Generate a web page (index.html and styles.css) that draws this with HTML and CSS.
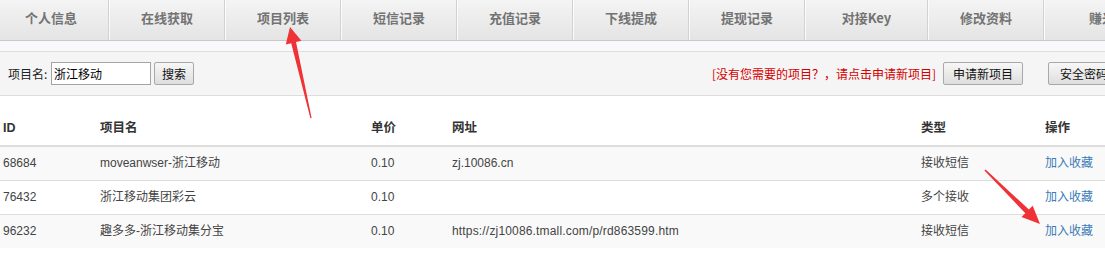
FILE: index.html
```html
<!DOCTYPE html>
<html lang="zh-CN">
<head>
<meta charset="utf-8">
<title>项目列表</title>
<link rel="stylesheet" href="styles.css">
</head>
<body>
<div class="page">
  <nav class="tabs">
    <a class="tab">个人信息</a>
    <a class="tab">在线获取</a>
    <a class="tab">项目列表</a>
    <a class="tab">短信记录</a>
    <a class="tab">充值记录</a>
    <a class="tab">下线提成</a>
    <a class="tab">提现记录</a>
    <a class="tab tab-wide">对接Key</a>
    <a class="tab">修改资料</a>
    <a class="tab">赚米</a>
  </nav>
  <div class="band"></div>
  <div class="searchbar">
    <label class="search-label">项目名:</label>
    <input class="search-input" type="text" value="浙江移动">
    <button class="btn btn-search">搜索</button>
    <div class="search-right">
      <span class="notice">[没有您需要的项目？，请点击申请新项目]</span>
      <button class="btn btn-apply">申请新项目</button>
      <button class="btn btn-safe">安全密码</button>
    </div>
  </div>
  <table class="list">
    <colgroup>
      <col class="c-id"><col class="c-name"><col class="c-price"><col class="c-url"><col class="c-type"><col class="c-op">
    </colgroup>
    <thead>
      <tr><th>ID</th><th>项目名</th><th>单价</th><th>网址</th><th>类型</th><th>操作</th></tr>
    </thead>
    <tbody>
      <tr class="odd"><td>68684</td><td>moveanwser-浙江移动</td><td>0.10</td><td>zj.10086.cn</td><td>接收短信</td><td><a class="link">加入收藏</a></td></tr>
      <tr><td>76432</td><td>浙江移动集团彩云</td><td>0.10</td><td></td><td>多个接收</td><td><a class="link">加入收藏</a></td></tr>
      <tr class="odd"><td>96232</td><td>趣多多-浙江移动集分宝</td><td>0.10</td><td class="url">https://zj10086.tmall.com/p/rd863599.htm</td><td>接收短信</td><td><a class="link">加入收藏</a></td></tr>
    </tbody>
  </table>
  <svg class="arrows" width="1105" height="263" viewBox="0 0 1105 263">
    <polygon fill="#ee3236" points="311.6,118 296,42 301.4,40.8 290,27 285.8,44.4 291.2,43.2 310.4,118.2"/>
    <polygon fill="#ee3236" points="984.4,170.6 1025.3,213.2 1021.5,217.1 1040,224 1032.7,205.7 1028.9,209.6 985.6,169.4"/>
  </svg>
</div>
</body>
</html>
```
FILE: styles.css
```css
html, body {
  margin: 0;
  padding: 0;
  background: #ffffff;
}
body {
  font-family: "Liberation Sans", Arial, "Noto Sans CJK SC", sans-serif;
  font-size: 12px;
  color: #333333;
  overflow: hidden;
  width: 1105px;
  height: 263px;
}
.page {
  position: relative;
  width: 1105px;
  height: 263px;
  overflow: hidden;
}
.tabs {
  display: flex;
  height: 40px;
  margin-left: -7px;
  width: 1200px;
  background: linear-gradient(#f4f4f4, #e4e4e4);
  border-bottom: 1px solid #c9c9c9;
}
.tab {
  flex: 0 0 auto;
  width: 114px;
  box-sizing: content-box;
  border-left: 1px solid #fbfbfb;
  border-right: 1px solid #d2d2d2;
  line-height: 36px;
  text-align: center;
  font-family: "Noto Sans CJK SC", sans-serif;
  font-weight: bold;
  font-size: 13px;
  color: #737373;
}
.tab-wide {
  width: 121px;
}
.band {
  height: 10px;
  background: #f9f9fc;
  border-bottom: 1px solid #dedede;
}
.searchbar {
  display: flex;
  align-items: center;
  height: 44px;
  width: 1130px;
  box-sizing: border-box;
  padding: 0 10px 0 8px;
  background: #f5f5f5;
  border-bottom: 1px solid #dddddd;
}
.search-label {
  font-family: "Noto Sans CJK SC", sans-serif;
  font-size: 12px;
  color: #222;
  width: 43px;
}
.search-input {
  width: 100px;
  height: 23px;
  box-sizing: border-box;
  margin: 0;
  padding: 0 0 0 2px;
  border: 1px solid #a4a4a4;
  font-family: "Noto Sans CJK SC", sans-serif;
  font-size: 12px;
  color: #000;
  background: #fff;
}
.btn {
  height: 23px;
  box-sizing: border-box;
  margin: 0;
  padding: 0;
  border: 1px solid #a9a9a9;
  border-radius: 2px;
  background: linear-gradient(#f7f7f7, #dedede);
  font-family: "Noto Sans CJK SC", sans-serif;
  font-size: 12px;
  color: #111;
}
.btn-search {
  width: 40px;
  margin-left: 3px;
}
.search-right {
  margin-left: auto;
  display: flex;
  align-items: center;
}
.notice {
  font-family: "Noto Sans CJK SC", sans-serif;
  color: #d40000;
  font-size: 12px;
  margin-right: 7px;
}
.btn-apply {
  width: 80px;
}
.btn-safe {
  width: 72px;
  margin-left: 25px;
}
.list {
  margin-top: 16px;
  margin-left: -5px;
  width: 1150px;
  border-collapse: collapse;
  table-layout: fixed;
  font-family: "Liberation Sans", Arial, "Noto Sans CJK SC", sans-serif;
  font-size: 12px;
}
.c-id { width: 97px; }
.c-name { width: 271px; }
.c-price { width: 81px; }
.c-url { width: 469px; }
.c-type { width: 124px; }
.c-op { width: 108px; }
.list th {
  text-align: left;
  padding: 8px;
  line-height: 17px;
  font-weight: bold;
  font-size: 12.5px;
  font-family: "Liberation Sans", Arial, "Noto Sans CJK SC", sans-serif;
  color: #333;
  border-bottom: 2px solid #dddddd;
}
.list td {
  padding: 8px;
  line-height: 17px;
  color: #444;
  border-top: 1px solid #dddddd;
  white-space: nowrap;
}
.list td.url {
  letter-spacing: 0.17px;
}
.list tr.odd td {
  background: #f9f9f9;
}
.link {
  color: #3a7bb8;
  text-decoration: none;
}
.arrows {
  position: absolute;
  left: 0;
  top: 0;
  pointer-events: none;
}
```
